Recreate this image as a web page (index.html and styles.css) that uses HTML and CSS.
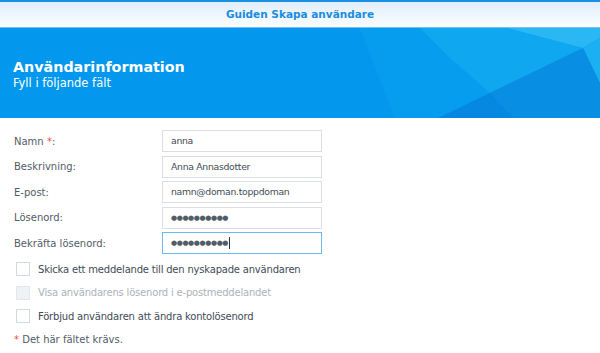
FILE: index.html
```html
<!DOCTYPE html>
<html lang="sv">
<head>
<meta charset="utf-8">
<title>Guiden Skapa användare</title>
<link rel="stylesheet" href="styles.css">
</head>
<body>
<div class="window">
  <div class="titlebar">Guiden Skapa användare</div>
  <div class="banner">
    <svg class="facets" width="600" height="90" viewBox="0 0 600 90" aria-hidden="true">
      <polygon points="360,0 420,0 450,30 490,65 438,90 395,90" fill="#0aa0f0" opacity="0.7"/>
      <polygon points="420,0 507,0 583,20 490,65 450,30" fill="#16acf2" opacity="0.75"/>
      <polygon points="507,0 600,0 600,10 583,20" fill="#2ab7f4"/>
      <polygon points="583,20 600,10 600,55" fill="#1bb0f2"/>
      <polygon points="490,65 583,20 600,55 600,90 513,90" fill="#0a8ce0" opacity="0.8"/>
      <polygon points="438,90 490,65 513,90" fill="#0880da" opacity="0.7"/>
    </svg>
    <div class="banner-text">
      <h1 class="banner-title">Användarinformation</h1>
      <p class="banner-sub">Fyll i följande fält</p>
    </div>
  </div>
  <form class="form">
    <div class="fields">
      <label class="label">Namn <span class="req">*</span>:</label>
      <div class="input">anna</div>
      <label class="label">Beskrivning:</label>
      <div class="input">Anna Annasdotter</div>
      <label class="label">E-post:</label>
      <div class="input">namn@doman.toppdoman</div>
      <label class="label">Lösenord:</label>
      <div class="input dots">●●●●●●●●●●</div>
      <label class="label">Bekräfta lösenord:</label>
      <div class="input dots focus">●●●●●●●●●●<span class="caret"></span></div>
    </div>
    <div class="checks">
      <div class="check"><span class="box"></span><span class="check-label">Skicka ett meddelande till den nyskapade användaren</span></div>
      <div class="check disabled"><span class="box"></span><span class="check-label">Visa användarens lösenord i e-postmeddelandet</span></div>
      <div class="check"><span class="box"></span><span class="check-label">Förbjud användaren att ändra kontolösenord</span></div>
    </div>
    <p class="note"><span class="req">*</span> Det här fältet krävs.</p>
  </form>
</div>
</body>
</html>
```
FILE: styles.css
```css
* { box-sizing: border-box; }
html, body { margin: 0; padding: 0; background: #ffffff; }
body { font-family: "DejaVu Sans", Verdana, sans-serif; font-size: 10px; color: #414b55; }
.window { width: 600px; height: 353px; overflow: hidden; border-top: 2px solid #1a8fe3; }
.titlebar {
  height: 26px;
  background: linear-gradient(#dfeffc, #fbfdff);
  border-bottom: 1px solid #72c0f2;
  text-align: center;
  font-weight: bold;
  font-size: 10.5px;
  line-height: 25px;
  color: #1c8ce0;
}
.banner {
  position: relative;
  height: 90px;
  background: #0398ee;
  overflow: hidden;
  display: flex;
  align-items: center;
}
.facets { position: absolute; left: 0; top: 0; }
.banner-text { position: relative; padding: 2px 0 0 13px; }
.banner-title { margin: 0; font-size: 14.3px; font-weight: bold; color: #ffffff; line-height: 18px; }
.banner-sub { margin: 0; font-size: 11.5px; color: #ffffff; line-height: 15px; }
.form { padding: 12px 0 0 14px; margin: 0; }
.fields {
  display: grid;
  grid-template-columns: 148px 160px;
  grid-auto-rows: 22px;
  row-gap: 3.5px;
  align-items: center;
}
.label { color: #525c66; }
.req { color: #f0504a; }
.input {
  height: 22px;
  border: 1px solid #d9dfe5;
  padding: 0 8px;
  line-height: 20px;
  font-size: 9.3px;
  letter-spacing: -0.3px;
  color: #414b55;
  white-space: nowrap;
}
.dots { font-size: 7px; letter-spacing: -0.4px; color: #525c66; }
.focus { border-color: #6cbbf0; }
.caret { display: inline-block; width: 1px; height: 12px; background: #333; vertical-align: middle; margin-left: 1px; }
.checks { display: flex; flex-direction: column; gap: 9.5px; margin-top: 8px; padding-left: 2px; }
.check { display: flex; align-items: center; gap: 8px; height: 14px; }
.box { width: 14px; height: 14px; border: 1px solid #d3d9e0; background: #fff; flex: none; }
.check-label { color: #414b55; letter-spacing: -0.2px; }
.disabled .box { background: #eef2f6; border-color: #e2e7ec; }
.disabled .check-label { color: #abb3bb; }
.note { margin: 11px 0 0; font-size: 10px; color: #525c66; }
```
